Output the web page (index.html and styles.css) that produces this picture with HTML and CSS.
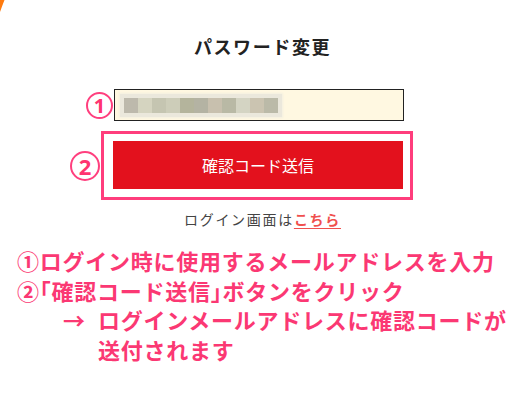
FILE: index.html
```html
<!DOCTYPE html>
<html lang="ja">
<head>
<meta charset="utf-8">
<link rel="stylesheet" href="styles.css">
</head>
<body>
<svg class="corner" width="8" height="14" viewBox="0 0 8 14"><path d="M0 0 H4.5 Q2.5 5 0 12 Z" fill="#ff7b0f"/></svg>
<main class="page">
  <h1 class="title">パスワード変更</h1>
  <div class="row row-input">
    <span class="num num-1">1</span>
    <div class="input">
      <div class="mask">
        <i style="background:#bdb9ac"></i><i style="background:#d5d4c0"></i><i style="background:#c5c5b1"></i><i style="background:#cdcdb9"></i><i style="background:#b4b49c"></i><i style="background:#b4b3a3"></i><i style="background:#c8c0ae"></i><i style="background:#b9b9a5"></i><i style="background:#d4d4c3"></i><i style="background:#cbc4b1"></i><i style="background:#bbbaa8"></i>
      </div>
    </div>
  </div>
  <div class="row row-button">
    <span class="num num-2">2</span>
    <div class="frame">
      <button class="btn">確認コード送信</button>
    </div>
  </div>
  <p class="login">ログイン画面は<a class="link">こちら</a></p>
  <div class="notes">
    <p class="note">①ログイン時に使用するメールアドレスを入力</p>
    <p class="note">②<span class="half">「</span>確認コード送信<span class="half">」</span>ボタンをクリック</p>
    <div class="note sub">
      <span class="arrow">→</span>
      <span class="subtext">ログインメールアドレスに確認コードが<br>送付されます</span>
    </div>
  </div>
</main>
</body>
</html>
```

FILE: styles.css
```css
* { box-sizing: border-box; }
html, body { margin: 0; padding: 0; background: #fff; }
body {
  width: 525px;
  height: 400px;
  overflow: hidden;
  font-family: "Noto Sans CJK JP", "Noto Sans", sans-serif;
  position: relative;
}
.corner { position: absolute; left: 0; top: 0; }
.page { display: flex; flex-direction: column; }
.title {
  margin: 33px 0 0 0;
  font-size: 18px;
  line-height: 26px;
  font-weight: 700;
  color: #222;
  text-align: center;
  letter-spacing: 1.6px;
}
.row { display: flex; align-items: center; }
.row-input { margin-top: 30px; padding-left: 86px; }
.num {
  display: flex;
  align-items: center;
  justify-content: center;
  border: 2px solid #ff3f7e;
  border-radius: 50%;
  color: #ff3470;
  font-weight: 700;
  font-family: "Noto Sans", "Noto Sans CJK JP", sans-serif;
}
.num-1 { width: 27px; height: 27px; font-size: 20px; margin-right: 1px; }
.num-2 { width: 30px; height: 30px; font-size: 22px; margin-right: 1px; }
.input {
  width: 290px;
  height: 32px;
  border: 1.5px solid #222;
  background: #fff8e1;
  display: flex;
  align-items: center;
  padding-left: 5px;
}
.mask {
  display: flex;
  padding: 4px 4px;
  background: #ebe8dc;
  box-shadow: 0 0 2px 1px #f3efe0;
}
.mask i { display: block; width: 14px; height: 15px; }
.row-button { margin-top: 10px; padding-left: 70px; }
.frame {
  width: 312px;
  height: 69px;
  border: 3px solid #ff3d7c;
  padding: 7px 7px 8px 9px;
}
.btn {
  width: 290px;
  height: 48px;
  border: 0;
  margin: 0;
  background: #e3111d;
  color: #fff;
  font-family: "Noto Sans CJK JP", sans-serif;
  font-size: 16px;
  padding: 0;
  display: block;
}
.login {
  margin: 9px 0 0 0;
  text-align: center;
  font-size: 14px;
  line-height: 20px;
  color: #444;
  letter-spacing: 1.7px;
}
.link {
  color: #f0504e;
  font-weight: 700;
  text-decoration: underline;
  text-underline-offset: 3px;
}
.notes { margin-top: 17px; padding-left: 17px; }
.note {
  margin: 0;
  font-size: 22px;
  line-height: 29.5px;
  font-weight: 700;
  color: #fb3873;
  letter-spacing: 0.75px;
}
.half { font-feature-settings: "halt"; }
.sub { display: flex; }
.arrow { width: 81px; padding-left: 46px; flex: none; }
```
